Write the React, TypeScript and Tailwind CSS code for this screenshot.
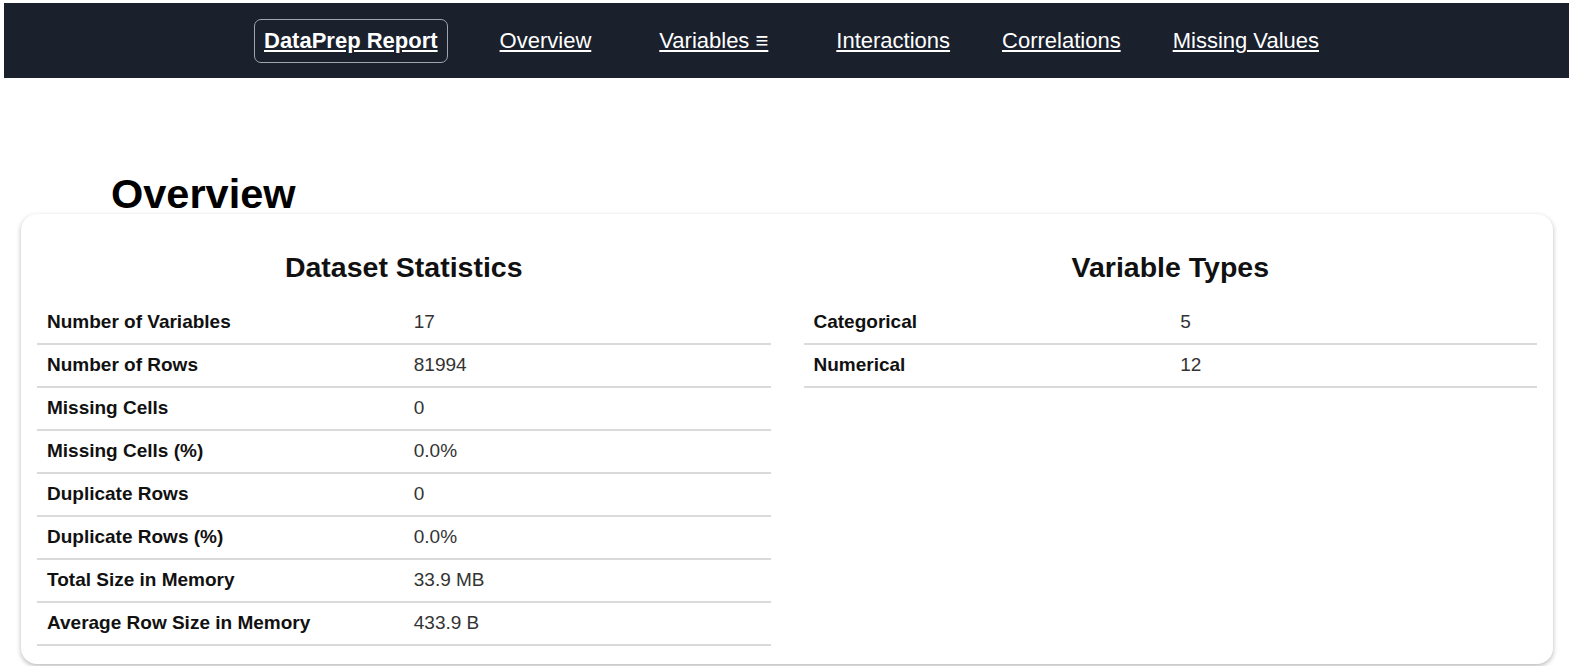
const navLinks = ['Overview', 'Variables ≡', 'Interactions', 'Correlations', 'Missing Values'];

const datasetStats: [string, string][] = [
  ['Number of Variables', '17'],
  ['Number of Rows', '81994'],
  ['Missing Cells', '0'],
  ['Missing Cells (%)', '0.0%'],
  ['Duplicate Rows', '0'],
  ['Duplicate Rows (%)', '0.0%'],
  ['Total Size in Memory', '33.9 MB'],
  ['Average Row Size in Memory', '433.9 B'],
];

const variableTypes: [string, string][] = [
  ['Categorical', '5'],
  ['Numerical', '12'],
];

interface StatTableProps {
  title: string;
  rows: [string, string][];
}

const StatTable = ({ title, rows }: StatTableProps) => (
  <div className="flex flex-col">
    <h2 className="text-center text-[28.5px] leading-[30px] font-bold text-[#111] mb-[20px]">
      {title}
    </h2>
    <div className="flex flex-col">
      {rows.map(([label, value]) => (
        <div
          key={label}
          className="grid grid-cols-2 h-[43px] items-center border-b-2 border-[#dadada]"
        >
          <div className="px-[10px] text-[19px] font-bold text-[#111]">{label}</div>
          <div className="px-[10px] text-[19px] text-[#333]">{value}</div>
        </div>
      ))}
    </div>
  </div>
);

const App = () => {
  return (
    <div
      className="min-h-screen bg-white"
      style={{ fontFamily: '"Liberation Sans", Arial, sans-serif' }}
    >
      <div className="pt-[3px] pl-[4px] pr-[8px]">
        <nav className="h-[75px] bg-[#1a202c] flex items-center justify-center gap-[52px] text-[22px] text-white">
          <a className="font-bold underline border border-[#a0a4ab] rounded-[7px] px-[9px] h-[44px] flex items-center">
            DataPrep Report
          </a>
          {navLinks.map((link) => (
            <a
              key={link}
              className={`underline ${link.startsWith('Variables') ? 'mx-4' : ''}`}
            >
              {link}
            </a>
          ))}
        </nav>
      </div>

      <h1 className="mt-[96px] pl-[111px] text-[41.5px] leading-[40px] font-bold text-black">
        Overview
      </h1>

      <div className="ml-[21px] mr-[24px] bg-white rounded-[16px] shadow-[0_2px_5px_rgba(0,0,0,0.28)] px-4 pt-[38px] pb-[18px] grid grid-cols-2 gap-[33px]">
        <StatTable title="Dataset Statistics" rows={datasetStats} />
        <StatTable title="Variable Types" rows={variableTypes} />
      </div>
    </div>
  );
};

export default App;
